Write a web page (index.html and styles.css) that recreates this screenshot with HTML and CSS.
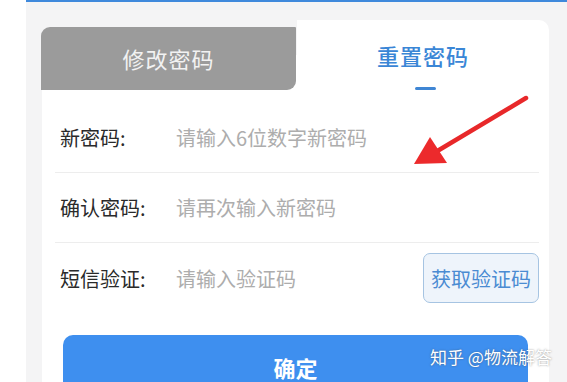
FILE: index.html
```html
<!DOCTYPE html>
<html lang="zh-CN">
<head>
<meta charset="utf-8">
<link rel="stylesheet" href="styles.css">
</head>
<body>
<div class="panel">
  <div class="card">
    <div class="tabs">
      <div class="tab-left"><div class="tab-gray">修改密码</div></div>
      <div class="tab-active">
        <span class="tab-text">重置密码</span>
        <span class="indicator"></span>
      </div>
    </div>
    <div class="form">
      <div class="row">
        <span class="label">新密码:</span>
        <span class="ph">请输入6位数字新密码</span>
      </div>
      <div class="row">
        <span class="label">确认密码:</span>
        <span class="ph">请再次输入新密码</span>
      </div>
      <div class="row last">
        <span class="label">短信验证:</span>
        <span class="ph">请输入验证码</span>
        <span class="code-btn">获取验证码</span>
      </div>
    </div>
    <div class="submit-wrap">
      <div class="submit">确定</div>
    </div>
  </div>
</div>
<svg class="arrow" width="567" height="382" viewBox="0 0 567 382">
  <line x1="526" y1="98" x2="434" y2="153" stroke="#e8282a" stroke-width="4.5" stroke-linecap="round"/>
  <polygon points="414,164 430,137 447,163" fill="#ec2a2c"/>
</svg>
<div class="watermark">知乎 @物流解答</div>
</body>
</html>
```
FILE: styles.css
```css
html, body {
  margin: 0;
  padding: 0;
  background: #ffffff;
  font-family: "Noto Sans CJK SC", "Noto Sans", sans-serif;
  overflow: hidden;
}
body {
  width: 567px;
  height: 382px;
  position: relative;
}
.panel {
  margin-left: 26px;
  height: 382px;
  background: #f4f4f5;
  border-top: 2px solid #3f89dc;
  padding: 18px 18px 0 16px;
  box-sizing: border-box;
  overflow: hidden;
}
.card {
  width: 507px;
}
.tabs {
  display: flex;
  height: 70px;
}
.tab-left {
  width: 255px;
  display: flex;
  align-items: flex-end;
  background: linear-gradient(to bottom, #f4f4f5 50%, #ffffff 50%);
}
.tab-gray {
  width: 255px;
  height: 63px;
  margin-left: -1px;
  background: #9b9b9b;
  border-radius: 9px 1px 9px 0;
  color: #f2f2f2;
  font-size: 22px;
  display: flex;
  align-items: center;
  justify-content: center;
  letter-spacing: 1px;
  padding-bottom: 2px;
  box-sizing: border-box;
}
.tab-active {
  flex: 1;
  background: #ffffff;
  border-radius: 0 10px 0 0;
  display: flex;
  flex-direction: column;
  align-items: center;
  padding-top: 22px;
  box-sizing: border-box;
}
.tab-text {
  font-size: 22px;
  line-height: 26px;
  color: #3a86d6;
  font-weight: 500;
  letter-spacing: 1px;
}
.indicator {
  display: block;
  width: 21px;
  height: 4px;
  border-radius: 2px;
  background: #3f86d4;
  margin-top: 19px;
  margin-left: 4px;
}
.form {
  background: #ffffff;
  padding: 13px 10px 0 13px;
}
.row {
  display: flex;
  align-items: center;
  height: 70px;
  border-bottom: 1px solid #ededed;
  padding-left: 5px;
  box-sizing: border-box;
}
.row.last {
  border-bottom: none;
}
.label {
  width: 116px;
  font-size: 20px;
  color: #2a2a2a;
  font-weight: 400;
}
.ph {
  flex: 1;
  font-size: 20px;
  color: #adadad;
}
.code-btn {
  width: 116px;
  height: 50px;
  box-sizing: border-box;
  border: 1px solid #a6c4e2;
  border-radius: 7px;
  background: #eef4fb;
  color: #4a8bd2;
  font-size: 20px;
  display: flex;
  align-items: center;
  justify-content: center;
}
.submit-wrap {
  background: #ffffff;
  padding: 22px 21px 0 21px;
}
.submit {
  height: 47px;
  box-sizing: border-box;
  padding-top: 19px;
  background: #3e8fef;
  border-radius: 10px 10px 0 0;
  color: #ffffff;
  font-size: 22px;
  font-weight: 700;
  line-height: 26px;
  text-align: center;
}
.arrow {
  position: absolute;
  left: 0;
  top: 0;
  pointer-events: none;
}
.watermark {
  position: absolute;
  left: 430px;
  top: 344px;
  font-size: 17px;
  color: #ffffff;
  white-space: nowrap;
  text-shadow: 0 0 2px rgba(60, 60, 60, 0.6);
}
```
